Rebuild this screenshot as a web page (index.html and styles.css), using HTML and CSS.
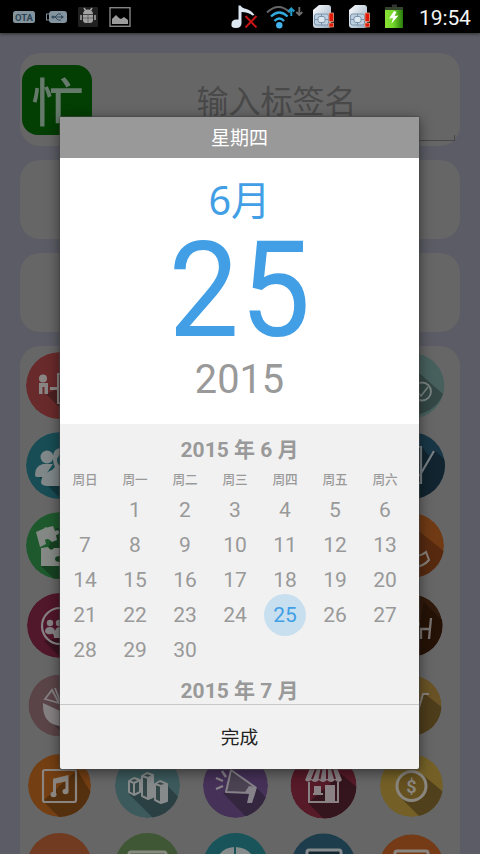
FILE: index.html
```html
<!DOCTYPE html>
<html lang="zh-CN">
<head>
<meta charset="utf-8">
<title>标签</title>
<link rel="stylesheet" href="styles.css">
</head>
<body>
<div class="screen">
  <header class="status">
    <svg class="status-left" width="140" height="33" viewBox="0 0 140 33">
      <rect x="13" y="11" width="22" height="12" rx="2.5" fill="#83949f"/>
      <text x="24" y="20.5" class="ota" text-anchor="middle" textLength="18" lengthAdjust="spacingAndGlyphs">OTA</text>
      <rect x="46.5" y="14" width="4" height="6" fill="none" stroke="#7d8c96"/>
      <rect x="49" y="11" width="18" height="12" rx="3" fill="#83949f"/>
      <path d="M52 17h10M55 17l3-3h3M55 17l3 3h3" stroke="#344b5a" fill="none"/><circle cx="53" cy="17" r="1.6" fill="#344b5a"/><path d="M61 15l3 2-3 2z" fill="#344b5a"/>
      <rect x="78" y="7" width="20" height="20" rx="1" fill="#202020"/>
      <path d="M83 14a5 4.5 0 0 1 10 0zM83 15h10v5q0 3-3 3h-4q-3 0-3-3z" fill="#a2a2a2"/>
      <path d="M84 8l2 3M92 8l-2 3M81 15v5M95 15v5" stroke="#a2a2a2" stroke-width="1.6"/>
      <path d="M88 15v8M83 18h10M83 14.5h10" stroke="#555" stroke-width=".7"/>
      <rect x="110" y="7.7" width="20" height="18.6" fill="none" stroke="#858585" stroke-width="1.4"/>
      <path d="M112 24v-5l4-4 3 3 2 1 3-2 4 3v4z" fill="#9c9c9c"/>
    </svg>
    <svg class="status-right" width="180" height="33" viewBox="0 0 180 33">
      <defs>
        <linearGradient id="sim" x2="1" y2="1"><stop stop-color="#fff"/><stop offset="1" stop-color="#91a9be"/></linearGradient>
        <linearGradient id="bat"><stop stop-color="#8ae234"/><stop offset=".45" stop-color="#74d82b"/><stop offset="1" stop-color="#287a0c"/></linearGradient>
        <g id="simcard">
          <path d="M6 5h9q3 0 3 3v17q0 3-3 3H3q-3 0-3-3V10z" fill="url(#sim)"/>
          <rect x="1.500" y="14" width="14" height="11" rx="2" fill="#bdd0e0" stroke="#7a93aa"/>
          <path d="M2 19.500h3M12 19.500h3M8.500 14v2M8.500 23v2" stroke="#7a93aa"/><rect x="5" y="16.500" width="7" height="6" rx="2" fill="#dce7f0" stroke="#7a93aa"/>
          <path d="M16 13h4.500v8.500H16zM16 23h4.500v4H16z" fill="#e01808" stroke="#e6a080" stroke-width=".8"/>
        </g>
      </defs>
      <path d="M9.500 5.500h2q1.500 2.500 6 3.500 5 1.500 8 6l-2 .5q-4-3.500-11-3.500v11q0 5-5.500 5T2.500 24q0-4.500 5-4.500h2z" fill="#dce7f1"/>
      <path d="M16.500 16l11 11.500M27.500 16l-11 11.500" stroke="#c51414" stroke-width="2"/>
      <path d="M38 12.500q11.500-11 23 0" fill="none" stroke="#666" stroke-width="2"/>
      <path d="M42 16.500q8.300-8 16.600 0M45.500 21q4.800-5 9.600 0" fill="none" stroke="#32aadb" stroke-width="2.300"/>
      <circle cx="50.300" cy="25.300" r="3.200" fill="#43b4ee"/>
      <path d="M62.300 16V8M59.300 11.500l3-3 3 3" fill="none" stroke="#209dcd" stroke-width="2"/>
      <path d="M70.300 7v8M67.300 12l3 3 3-3" fill="none" stroke="#707070" stroke-width="1.800"/>
      <use href="#simcard" x="84"/><use href="#simcard" x="120"/>
      <path d="M163 4.500h5v3h-5z" fill="#333"/><rect x="156" y="7" width="18" height="4" fill="#33432c"/>
      <rect x="156" y="10" width="18" height="18" fill="url(#bat)"/>
      <path d="M165 11l-5 7.500 4-.5-1.500 5.500 7-8-4 .5 2-4z" fill="#fff"/>
    </svg>
    <span class="clock">19:54</span>
  </header>

  <main class="page">
    <section class="card name-card">
      <div class="app-icon">忙</div>
      <div class="name-input"><span>输入标签名</span></div>
    </section>
    <section class="card slim"></section>
    <section class="card slim"></section>
    <section class="card icons">
      <svg class="c1 r335" viewBox="0 0 67 67"><circle cx="33.500" cy="33.500" r="33.500" fill="#692a2b"/><path d="M20 42l25 25 20-20V22z" fill="#4a2021"/><circle cx="17" cy="26.500" r="4" fill="#8a8585"/><path d="M13 31h9v11h-3.500v-7h-2v7H13zM24 35h7v3h-7z" fill="#8a8585"/><path d="M45 22H32v29h13" fill="none" stroke="#8a8585" stroke-width="2"/></svg>
      <svg class="c5 r33" viewBox="0 0 67 67"><circle cx="33.500" cy="34" r="33" fill="#47605d"/><path d="M15 -2l50 44q-8 20-35 22L15 50z" fill="#344744"/><circle cx="44" cy="39.500" r="9" fill="none" stroke="#7a8583" stroke-width="1.800"/><path d="M39 39l4 5 7-9" fill="none" stroke="#7a8583" stroke-width="1.500"/></svg>

      <svg class="c1 r335" viewBox="0 0 67 67"><circle cx="33.500" cy="33.500" r="33.500" fill="#184d55"/><path d="M13 45l22 22 32-32V25z" fill="#12383e"/><g fill="#808788"><circle cx="21" cy="25" r="6.500"/><path d="M9 43q0-9 8-11h10l-9 13h-7q-2 0-2-2z"/><path d="M27 25q0-9 9-9v3l-5 8q0 6 5 8v19H22q-7 0-7-4 0-8 11-12l3-3q-2-3-2-10z"/></g></svg>
      <svg class="c5 r335" viewBox="0 0 67 67"><circle cx="33.500" cy="33.500" r="33.500" fill="#183646"/><path d="M35 15l9 0 7 9 5-6 11 10q5 37-32 39z" fill="#11242f"/><path d="M34 15h9v36h-9M56 19L42 43l-7 4" fill="none" stroke="#777f83" stroke-width="2.200"/></svg>

      <svg class="c1 r335" viewBox="0 0 67 67"><circle cx="33.500" cy="33.500" r="33.500" fill="#1e592d"/><path d="M15 54l14 14h38V16H30z" fill="#174222"/><g fill="#858985"><path d="M10 20l8-3.500q1-2 3-1l6-1.500 2 5q4-2 4 1 0 3-3 3l1 5-5 2q-4-5-7-2l1 4-6 3zM15 36l7-1q3 5 6 1h6v8q-5 0-5 3t5 3v4H15z"/></g></svg>
      <svg class="c5 r325" viewBox="0 0 67 67"><circle cx="33.500" cy="33.500" r="32.500" fill="#703a15"/><path d="M37 16l30 24q-5 25-32 28z" fill="#572a10"/><path d="M33 16l3 6 3 17q-1 3-5 4M36 43q6 2 12-3l3 8q-5 6-16 8M34 17v-4" fill="none" stroke="#87807a" stroke-width="2"/></svg>

      <svg class="c1 r325" viewBox="0 0 67 67"><circle cx="33.500" cy="33.500" r="32.500" fill="#51172a"/><path d="M18 49l20 20 30-30z" fill="#38131f"/><circle cx="34" cy="34" r="18" fill="none" stroke="#858184" stroke-width="2.200"/><g fill="#858184"><circle cx="24" cy="31" r="3.200"/><circle cx="33" cy="31" r="3.200"/><path d="M19 40q0-5 5-5 4 0 5 4 1-4 5-4v11h-6q0-5-3-4-4 1-6-2z"/></g></svg>
      <svg class="c5 r31" viewBox="0 0 67 67"><circle cx="33.500" cy="33.500" r="31" fill="#301a0b"/><path d="M46 10l22 22q-2 27-33 37z" fill="#251206"/><path d="M34 32h8M53 26l-2 21M43 47V37h8" fill="none" stroke="#787370" stroke-width="2.300"/></svg>

      <svg class="c1 r31" viewBox="0 0 67 67"><circle cx="33.500" cy="33.500" r="31" fill="#5a4448"/><path d="M22 47l22 22 25-20z" fill="#453337"/><path d="M17 31l17 8v15q-18-2-17-23z" fill="#858183"/><path d="M19 27l14 4-7-13zM29 16l5 13" fill="none" stroke="#858183" stroke-width="1.800"/></svg>
      <svg class="c5 r30" viewBox="0 0 67 67"><circle cx="33.500" cy="33.500" r="30" fill="#695326"/><path d="M46 21l20 16q-2 25-32 30V42z" fill="#4e3d1b"/><path d="M51 22h-6l-9 31M38 30h4M36 37h5" fill="none" stroke="#87817b" stroke-width="2"/></svg>

      <svg class="c1 r315" viewBox="0 0 67 67"><circle cx="33.500" cy="33.500" r="31.500" fill="#743f13"/><path d="M17 49l18 18q25 1 34-20L51 18z" fill="#55300e"/><rect x="17" y="18" width="33" height="32" rx="2" fill="none" stroke="#8a8580" stroke-width="2.200"/><path d="M28.500 42V28l12.500-3v14" fill="none" stroke="#8a8580" stroke-width="3"/><path d="M28 27l14-3v5l-14 3z" fill="#8a8580"/><ellipse cx="27.500" cy="42.500" rx="3" ry="2.700" fill="#8a8580"/><ellipse cx="39.500" cy="39.500" rx="3" ry="2.700" fill="#8a8580"/></svg>
      <svg class="c2 r325" viewBox="0 0 67 67"><circle cx="33.500" cy="33.500" r="32.500" fill="#3c5a5c"/><path d="M15 42l26 26q22-3 26-20L53 33z" fill="#2b4042"/><g fill="#334648" stroke="#868a8a" stroke-width="2" stroke-linejoin="round"><path d="M15 29l5-3 6 2v12l-6 3-5-3zM28 24l5-3 6 2v22l-5 2-6-3zM41 32l5-3 7 3v17l-6 2-6-3z"/><path d="M15 29l5 2 6-3M20 31v11M28 24l6 2 5-3M34 26v20M41 32l6 2 6-2M47 34v16" fill="none"/></g><path d="M34 26l5-2v21l-5 2zM47 34l6-2v17l-6 2z" fill="#868a8a"/></svg>
      <svg class="c3 r325" viewBox="0 0 67 67"><circle cx="33.500" cy="33.500" r="32.500" fill="#463158"/><path d="M21 41l26 27q17-5 21-18L54 35z" fill="#33263e"/><path d="M29 18l-5 22 25 1 4-6z" fill="#4b4352" stroke="#86828a" stroke-width="2" stroke-linejoin="round"/><path d="M14 37l7-3M14 26l7 3M20 19l4 6" fill="none" stroke="#86828a" stroke-width="2.400"/><path d="M47 34l8 1-2 7-3 9h-5l2-9-4-2z" fill="#86828a"/></svg>
      <svg class="c4 r33" viewBox="0 0 67 67"><circle cx="33.500" cy="33.500" r="33" fill="#571a28"/><path d="M18 51l18 18q28 0 33-32L51 22z" fill="#35151d"/><path d="M20 16h27l5 12q-3 4-7 0-4 4-8 0-4 4-8 0-4 4-8 0-3 3-6 0z" fill="#8a8184"/><path d="M26 17l-4 10M31.500 17l-2 10M37 17v10M42 17l3 10" stroke="#571a28" stroke-width="2"/><path d="M19 30v20h29V30M36 50V34h8v16" fill="none" stroke="#8a8184" stroke-width="2"/><path d="M24 34h7v7h2v2h-10v-2h1zM37 35h7v14h-7z" fill="#8a8184"/></svg>
      <svg class="c5 r315" viewBox="0 0 67 67"><circle cx="33.500" cy="33.500" r="31.500" fill="#746027"/><path d="M21 44l24 24q17-4 24-25L45 23z" fill="#51401c"/><circle cx="33.500" cy="34" r="14.500" fill="#65501f" stroke="#8a867f" stroke-width="3"/><text x="33.500" y="40.500" class="dollar" text-anchor="middle">$</text></svg>

      <svg class="c1" viewBox="0 0 67 67"><circle cx="33.500" cy="33.500" r="32.500" fill="#703b20"/></svg>
      <svg class="c2" viewBox="0 0 67 67"><circle cx="33.500" cy="33.500" r="32.500" fill="#405735"/><rect x="15" y="20" width="37" height="29" rx="2" fill="none" stroke="#858980" stroke-width="3"/></svg>
      <svg class="c3" viewBox="0 0 67 67"><circle cx="33.500" cy="33.500" r="32.500" fill="#18545a"/><path d="M13 34q3-18 19-19v20M54 34q-3-18-20-19v20" fill="#858a8a"/></svg>
      <svg class="c4" viewBox="0 0 67 67"><circle cx="33.500" cy="34" r="32.500" fill="#1d3d4c"/><rect x="17" y="18" width="34" height="30" rx="2" fill="#122731" stroke="#858a8c" stroke-width="3"/></svg>
      <svg class="c5" viewBox="0 0 67 67"><circle cx="33.500" cy="35" r="32.500" fill="#743b16"/><rect x="17" y="19" width="33" height="30" rx="2" fill="none" stroke="#8a8580" stroke-width="3"/></svg>
    </section>
  </main>

  <div class="dialog">
    <div class="weekday">星期四</div>
    <div class="chosen">
      <div class="month">6月</div>
      <div class="day">25</div>
      <div class="year">2015</div>
    </div>
    <div class="calendar">
      <div class="title">2015 年 6 月</div>
      <div class="names"><span>周日</span><span>周一</span><span>周二</span><span>周三</span><span>周四</span><span>周五</span><span>周六</span></div>
      <div class="days">
        <span></span><span>1</span><span>2</span><span>3</span><span>4</span><span>5</span><span>6</span>
        <span>7</span><span>8</span><span>9</span><span>10</span><span>11</span><span>12</span><span>13</span>
        <span>14</span><span>15</span><span>16</span><span>17</span><span>18</span><span>19</span><span>20</span>
        <span>21</span><span>22</span><span>23</span><span>24</span><span class="selected">25</span><span>26</span><span>27</span>
        <span>28</span><span>29</span><span>30</span>
      </div>
      <div class="title next">2015 年 7 月</div>
    </div>
    <div class="done">完成</div>
  </div>
</div>
</body>
</html>
```
FILE: styles.css
```css
* { box-sizing: border-box; }
body { margin: 0; background: #5c5c66; font-family: Roboto, "Noto Sans CJK SC", sans-serif; }
.screen { position: relative; width: 480px; height: 854px; overflow: hidden; display: flex; flex-direction: column; }

.status { flex: none; height: 33px; background: #000; display: flex; align-items: center; box-shadow: 0 1px 3px rgba(0,0,0,.5); }
.status-right { margin-left: 89px; }
.clock { flex: 1; padding: 3px 0 0 10px; color: #f4f4f4; font-size: 21px; line-height: 30px; letter-spacing: -.1px; white-space: nowrap; }
.ota { font: bold 9px Roboto, sans-serif; fill: #2d4452; }
.dollar { font: bold 18px Roboto, sans-serif; fill: #8a867f; }

.page { padding: 20px 20px 0; display: flex; flex-direction: column; gap: 14px; }
.card { flex: none; background: #666; border-radius: 20px; }
.name-card { height: 93px; display: flex; padding: 12px 5px 0 2px; }
.app-icon { width: 70px; height: 70px; border-radius: 16px; background: #033e03; color: #657a6a; font: 500 52px/70px "Noto Sans CJK SC", sans-serif; text-align: center; padding-left: 1px; }
.name-input { flex: 1; height: 76px; margin-left: 7px; border-bottom: 1px solid #474747; color: #494949; font-size: 32px; line-height: 74px; text-align: center; background: linear-gradient(#474747, #474747) right bottom / 1px 5px no-repeat; }
.name-input span { display: inline-block; margin-right: 78px; margin-left: 77px; }
.slim { height: 79px; }
.icons { height: 540px; padding: 6px 0 0 6px; display: grid; grid-template-columns: repeat(5, 67px); grid-auto-rows: 67px; gap: 13px 21px; }
.icons svg { width: 67px; height: 67px; }
.c1 { grid-column: 1; }
.c2 { grid-column: 2; }
.c3 { grid-column: 3; }
.c4 { grid-column: 4; }
.c5 { grid-column: 5; }
.r30 { clip-path: circle(30px); }
.r31 { clip-path: circle(31px); }
.r315 { clip-path: circle(31.5px); }
.r325 { clip-path: circle(32.5px); }
.r33 { clip-path: circle(33px); }
.r335 { clip-path: circle(33.5px); }

.dialog { position: absolute; left: 60px; top: 117px; width: 359px; height: 652px; display: flex; flex-direction: column; border-radius: 2px; overflow: hidden; background: #f1f1f1; box-shadow: 0 0 1px 1px rgba(70,70,70,.6), 0 3px 14px rgba(0,0,0,.5); color: #999; text-align: center; }
.weekday { flex: none; height: 41px; background: #999; color: #fff; font-size: 19px; line-height: 43px; }
.chosen { flex: none; height: 266px; background: #fff; display: flex; flex-direction: column; color: #429fe5; }
.month { height: 72px; padding-top: 20px; font: 39.5px/44px "Noto Sans", "Noto Sans CJK SC", sans-serif; }
.day { height: 120px; font-size: 133.5px; line-height: 122px; transform: scaleX(.94); letter-spacing: 1px; padding-left: 1px; }
.year { font-size: 41px; line-height: 58px; color: #999; transform: scaleX(.97); }
.calendar { flex: none; height: 280px; overflow: hidden; }
.title { height: 45px; padding-top: 11px; font-size: 21px; line-height: 30px; font-weight: 700; }
.names, .days { width: 350px; display: grid; grid-template-columns: repeat(7, 50px); }
.names { height: 24px; font-size: 12.6px; line-height: 21px; font-weight: 500; }
.days { grid-auto-rows: 35px; line-height: 35px; font-size: 21px; }
.selected { position: relative; z-index: 0; color: #429fe5; }
.selected::before { content: ""; position: absolute; z-index: -1; left: 4px; top: -4px; width: 42px; height: 42px; border-radius: 50%; background: #c8dff0; }
.next { padding-top: 8px; }
.done { flex: 1; border-top: 1px solid #c8c8c8; color: #222; font-size: 18.7px; line-height: 66px; }
```
